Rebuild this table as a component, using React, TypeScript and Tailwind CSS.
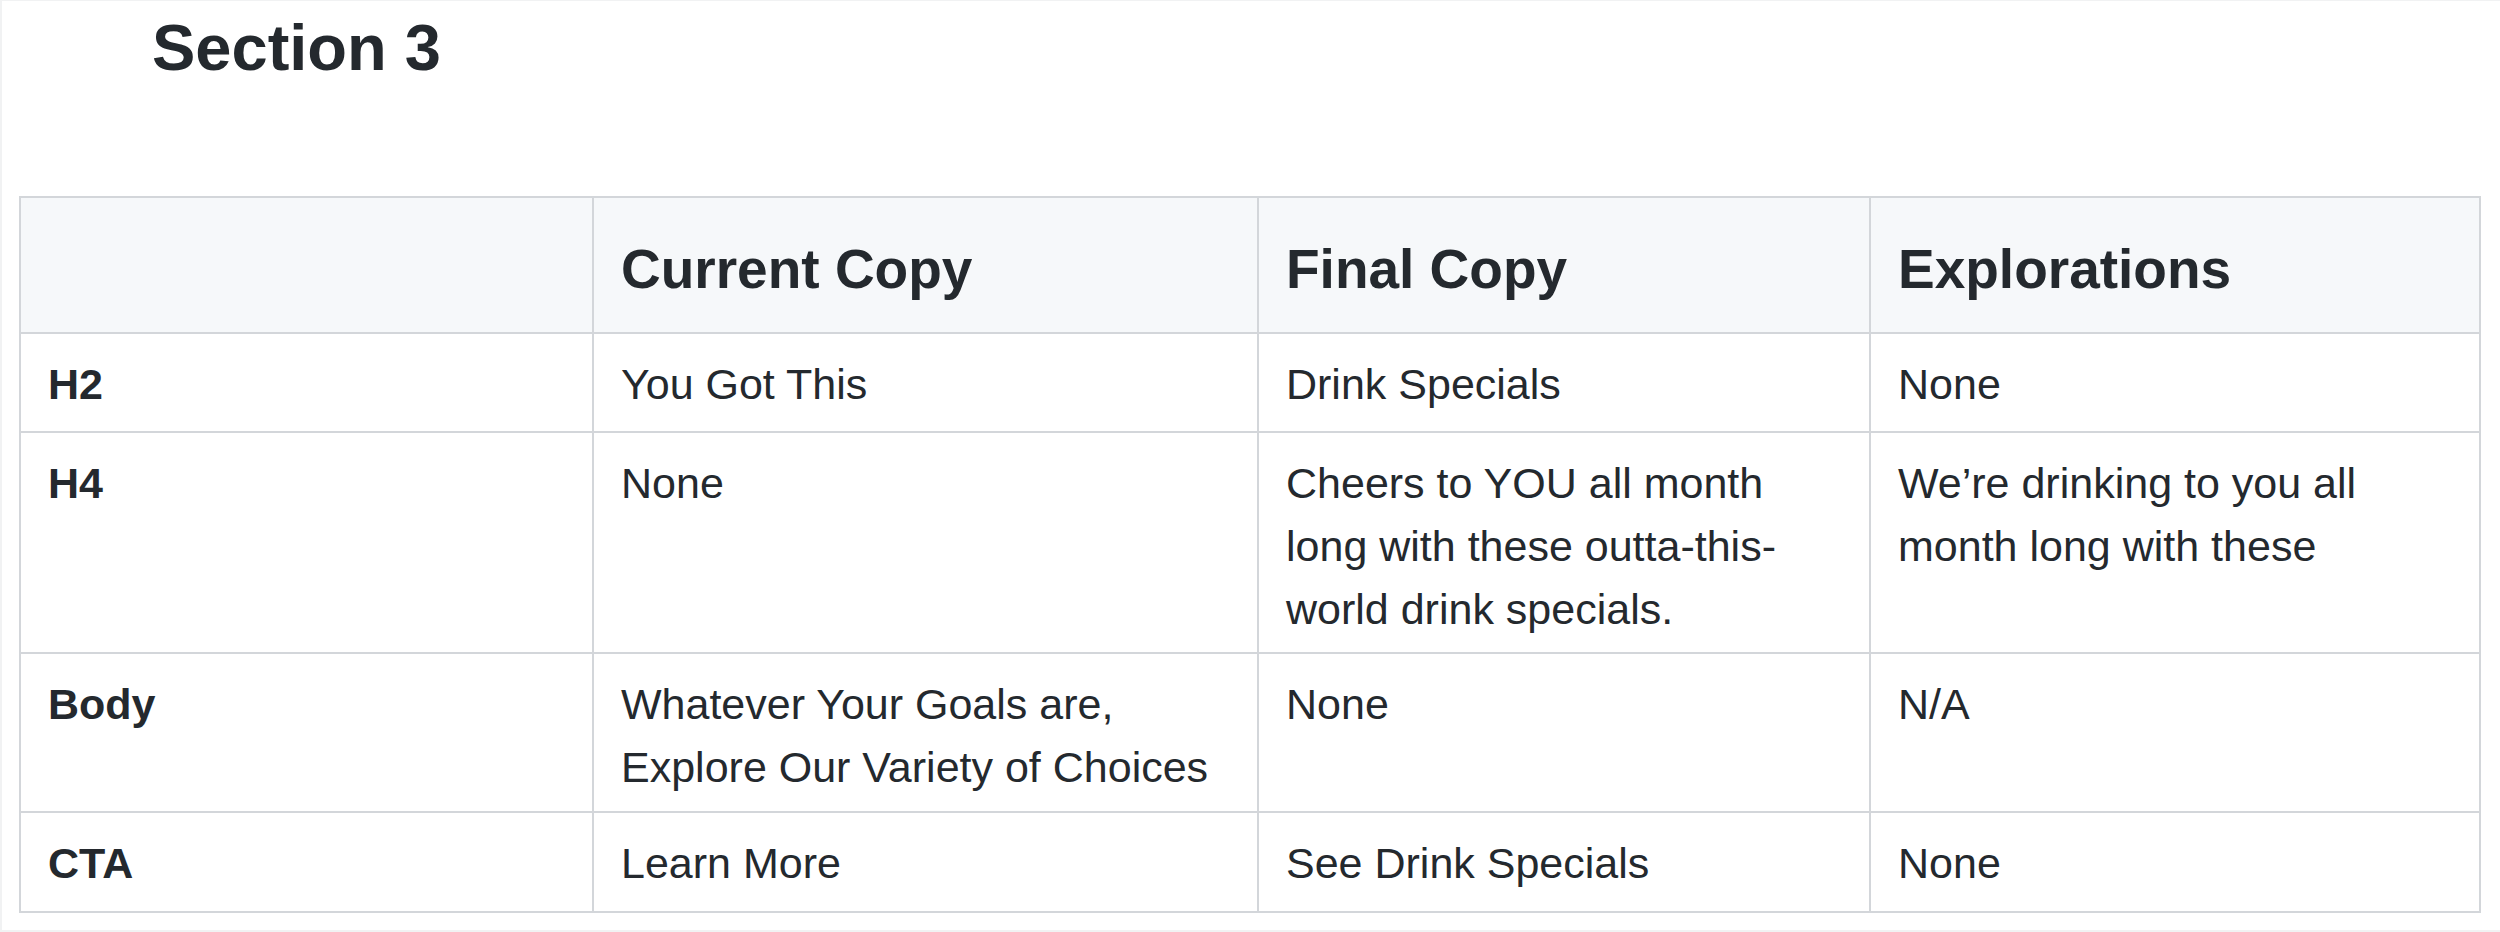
import React from "react";

type Row = { label: string; current: React.ReactNode; final: React.ReactNode; exp: React.ReactNode };

const rows: Row[] = [
  { label: "H2", current: "You Got This", final: "Drink Specials", exp: "None" },
  {
    label: "H4",
    current: "None",
    final: (
      <>
        Cheers to YOU all month
        <br />
        long with these outta-this-
        <br />
        world drink specials.
      </>
    ),
    exp: (
      <>
        We’re drinking to you all
        <br />
        month long with these
      </>
    ),
  },
  {
    label: "Body",
    current: (
      <>
        Whatever Your Goals are,
        <br />
        Explore Our Variety of Choices
      </>
    ),
    final: "None",
    exp: "N/A",
  },
  { label: "CTA", current: "Learn More", final: "See Drink Specials", exp: "None" },
];

const headCell =
  "bg-[#f6f8fa] border-r-2 border-b-2 border-[#d3d6da] pl-[27px] pr-[20px] pt-[30px] pb-[22px] text-[55px] leading-[82px] font-bold";
const bodyCell =
  "border-r-2 border-b-2 border-[#d3d6da] pl-[27px] pr-[20px] pt-[19px] text-[43px] leading-[63px]";

export default function App() {
  return (
    <div
      className="w-[2500px] h-[932px] bg-white text-[#24292e] overflow-hidden border-l-2 border-t border-b-2 border-[#f1f2f3]"
      style={{ fontFamily: '"Liberation Sans", Arial, sans-serif' }}
    >
      <h1 className="pl-[150px] pt-[14px] text-[65px] leading-[65px] font-bold">Section 3</h1>
      <div className="mt-[116px] ml-[17px] w-[2462px] grid grid-cols-[573px_665px_612px_610px] grid-rows-[136px_99px_221px_159px_100px] border-l-2 border-t-2 border-[#d3d6da]">
        <div className={headCell}></div>
        <div className={headCell}>Current Copy</div>
        <div className={headCell}>Final Copy</div>
        <div className={headCell}>Explorations</div>
        {rows.map((r) => (
          <React.Fragment key={r.label}>
            <div className={bodyCell + " font-bold"}>{r.label}</div>
            <div className={bodyCell}>{r.current}</div>
            <div className={bodyCell}>{r.final}</div>
            <div className={bodyCell}>{r.exp}</div>
          </React.Fragment>
        ))}
      </div>
    </div>
  );
}
